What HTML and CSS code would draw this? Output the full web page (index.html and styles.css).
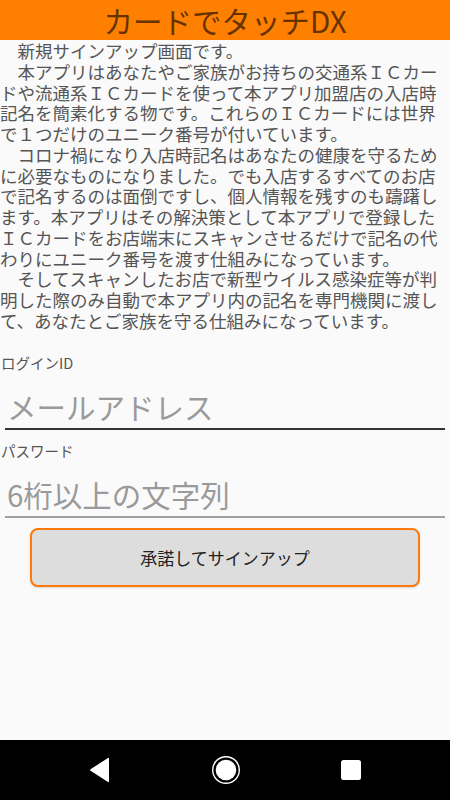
FILE: index.html
```html
<!DOCTYPE html>
<html lang="ja">
<head>
<meta charset="utf-8">
<title>カードでタッチDX</title>
<link rel="stylesheet" href="styles.css">
</head>
<body>
<div class="screen">
  <header class="appbar">カードでタッチDX</header>
  <main class="content">
    <p class="intro">　新規サインアップ画面です。<br>　本アプリはあなたやご家族がお持ちの交通系ＩＣカー<br>ドや流通系ＩＣカードを使って本アプリ加盟店の入店時<br>記名を簡素化する物です。これらのＩＣカードには世界<br>で１つだけのユニーク番号が付いています。<br>　コロナ禍になり入店時記名はあなたの健康を守るため<br>に必要なものになりました。でも入店するすべてのお店<br>で記名するのは面倒ですし、個人情報を残すのも躊躇し<br>ます。本アプリはその解決策として本アプリで登録した<br>ＩＣカードをお店端末にスキャンさせるだけで記名の代<br>わりにユニーク番号を渡す仕組みになっています。<br>　そしてスキャンしたお店で新型ウイルス感染症等が判<br>明した際のみ自動で本アプリ内の記名を専門機関に渡し<br>て、あなたとご家族を守る仕組みになっています。</p>
    <form class="form">
      <label class="field-label" for="login">ログインID</label>
      <input class="field field-active" id="login" type="email" placeholder="メールアドレス">
      <label class="field-label" for="pass">パスワード</label>
      <input class="field" id="pass" type="password" placeholder="6桁以上の文字列">
      <button class="submit" type="button">承諾してサインアップ</button>
    </form>
  </main>
  <nav class="navbar">
    <svg class="nav-icon" width="22" height="26" viewBox="0 0 22 26"><path d="M20 1.5 L20 24.5 Q20 25.5 19 25 L1.5 13.8 Q0.8 13 1.5 12.2 L19 1 Q20 0.5 20 1.5 Z" fill="#fff"/></svg>
    <svg class="nav-icon" width="30" height="30" viewBox="0 0 30 30"><circle cx="15" cy="15" r="13.3" fill="none" stroke="#fff" stroke-width="1.4"/><circle cx="15" cy="15" r="10.3" fill="#fff"/></svg>
    <svg class="nav-icon" width="20" height="20" viewBox="0 0 20 20"><rect x="0" y="0" width="20" height="20" rx="2.5" fill="#fff"/></svg>
  </nav>
</div>
</body>
</html>
```

FILE: styles.css
```css
* { box-sizing: border-box; }
html, body { margin: 0; padding: 0; }
body {
  font-family: "Noto Sans CJK JP", "Noto Sans", sans-serif;
  background: #fafafa;
}
.screen {
  width: 450px;
  height: 800px;
  display: flex;
  flex-direction: column;
  overflow: hidden;
}
.appbar {
  height: 40px;
  background: #ff8000;
  color: #663300;
  font-size: 29.5px;
  line-height: 40px;
  text-align: center;
}
.content {
  flex: 1;
  display: flex;
  flex-direction: column;
}
.intro {
  margin: 0;
  padding-top: 1px;
  font-size: 17.5px;
  line-height: 20.75px;
  color: #555;
  white-space: nowrap;
}
.form {
  display: flex;
  flex-direction: column;
  margin-top: 22px;
}
.field-label {
  font-size: 14.5px;
  line-height: 17px;
  color: #555;
  padding-left: 1px;
}
.field {
  display: block;
  height: 59px;
  margin: 0 5px;
  padding: 14px 2px 0;
  border: none;
  border-bottom: 2px solid #a0a0a0;
  background: transparent;
  font-family: inherit;
  font-size: 29.5px;
  color: #333;
  outline: none;
}
.field + .field-label { margin-top: 12px; }
.field-active { border-bottom-color: #333; }
.field::placeholder { color: #9a9a9a; }
.submit {
  margin: 10px 30px 0;
  height: 59px;
  background: #dddddd;
  border: 2px solid #ff7a0a;
  border-radius: 8px;
  font-family: inherit;
  font-size: 17px;
  color: #222;
  box-shadow: 0 1px 2px rgba(0,0,0,0.15);
}
.navbar {
  height: 60px;
  background: #000;
  display: flex;
  align-items: center;
  justify-content: center;
  gap: 100px;
}
.nav-icon { display: block; }
```
